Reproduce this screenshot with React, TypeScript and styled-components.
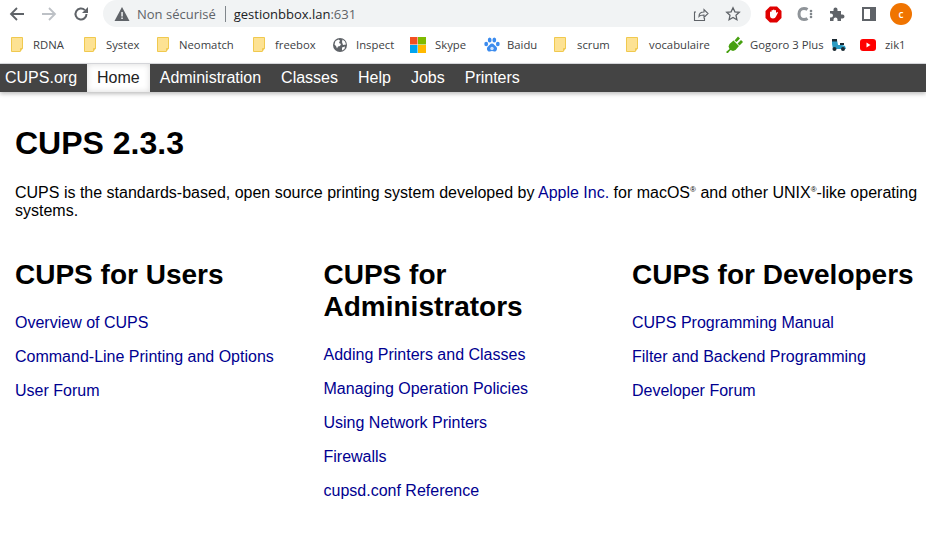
import styled, { createGlobalStyle } from "styled-components";
import { ReactNode } from "react";

const GlobalStyle = createGlobalStyle`
  html, body {
    margin: 0;
    padding: 0;
    background: #fff;
    overflow: hidden;
  }
  body {
    font-family: "Liberation Sans", Arial, sans-serif;
  }
`;

const Page = styled.div`
  width: 926px;
  height: 533px;
  overflow: hidden;
  display: flex;
  flex-direction: column;
`;

const Toolbar = styled.div`
  height: 28px;
  display: flex;
  align-items: center;
  flex-shrink: 0;
`;

const NavIcons = styled.div`
  display: flex;
  align-items: center;
  gap: 10px;
  padding-left: 6px;
  width: 103px;
  box-sizing: border-box;
  flex-shrink: 0;
`;

const IconSlot = styled.span`
  width: 22px;
  height: 22px;
  display: flex;
  align-items: center;
  justify-content: center;
  flex-shrink: 0;
`;

const Omnibox = styled.div`
  width: 648px;
  height: 27px;
  margin-top: -1px;
  border-radius: 14px;
  background: #f1f3f4;
  display: flex;
  align-items: center;
  padding-left: 11px;
  box-sizing: border-box;
  font-family: "Open Sans", sans-serif;
  font-size: 13px;
  flex-shrink: 0;
`;

const NotSecure = styled.span`
  color: #5f6368;
  margin-left: 7px;
  padding-right: 9px;
  border-right: 1px solid #80868b;
  line-height: 16px;
`;

const Host = styled.span`
  color: #202124;
  margin-left: 8px;
  flex: 1;
`;

const Port = styled.span`
  color: #5f6368;
`;

const OmniActions = styled.div`
  display: flex;
  gap: 10px;
  align-items: center;
  padding-right: 7px;
`;

const Extensions = styled.div`
  display: flex;
  align-items: center;
  gap: 10px;
  margin-left: 11px;
`;

const Avatar = styled.span`
  width: 22px;
  height: 22px;
  border-radius: 50%;
  background: #f07400;
  color: #fff;
  font-family: "Open Sans", sans-serif;
  font-size: 10px;
  font-weight: 600;
  display: flex;
  align-items: center;
  justify-content: center;
`;

const BookmarkBar = styled.div`
  height: 36px;
  display: flex;
  align-items: center;
  padding: 0 0 2px 11px;
  box-sizing: border-box;
  border-bottom: 1px solid #dadce0;
  flex-shrink: 0;
`;

const Bookmark = styled.div<{ $w: number; $gap?: number }>`
  width: ${(p) => p.$w}px;
  display: flex;
  align-items: center;
  gap: ${(p) => p.$gap ?? 11}px;
  font-family: "Open Sans", sans-serif;
  font-size: 11.3px;
  color: #3c4043;
  white-space: nowrap;
  flex-shrink: 0;
`;

const NavBar = styled.nav`
  height: 28px;
  background: #444;
  display: flex;
  align-items: stretch;
  font-size: 16px;
  box-shadow: 0 2px 4px rgba(0, 0, 0, 0.25);
  flex-shrink: 0;
`;

const NavLink = styled.a<{ $active?: boolean }>`
  display: flex;
  align-items: center;
  padding: 0 10px;
  color: ${(p) => (p.$active ? "#222" : "#fff")};
  background: ${(p) => (p.$active ? "#fff" : "transparent")};
  box-shadow: ${(p) =>
    p.$active ? "inset 0 0 6px rgba(0,0,0,0.15)" : "none"};
`;

const BrandLink = styled(NavLink)`
  padding: 0 10px 0 5px;
`;

const Content = styled.main`
  padding: 33px 8px 0 15px;
  color: #000;
  font-size: 16px;
`;

const Title = styled.h1`
  margin: 0 0 22px;
  font-size: 32px;
  line-height: 37px;
  font-weight: 700;
`;

const Intro = styled.p`
  margin: 0 0 39px;
  line-height: 18px;
`;

const AppleLink = styled.a`
  color: #000090;
`;

const Sup = styled.sup`
  font-size: 8px;
  line-height: 0;
`;

const Columns = styled.div`
  display: grid;
  grid-template-columns: 308.5px 308.5px 1fr;
`;

const ColumnTitle = styled.h2`
  margin: 0 0 23px;
  font-size: 28px;
  line-height: 32px;
  font-weight: 700;
`;

const LinkList = styled.div`
  display: flex;
  flex-direction: column;
  gap: 16px;
`;

const DocLink = styled.a`
  color: #000090;
  line-height: 18px;
  display: block;
`;

const Folder = () => (
  <svg width="12" height="15" viewBox="0 0 12 15">
    <path d="M.5.500h11v11l-2.500 3H.5z" fill="#fde293" stroke="#f0c94f" />
    <path d="M9.500 14.500v-3h2" fill="none" stroke="#f0c94f" />
  </svg>
);

const Globe = () => (
  <svg width="14" height="14" viewBox="0 0 14 14">
    <circle cx="7" cy="7" r="7" fill="#5f6368" />
    <path d="M2.500 3l3-1.500 1.500 1-1 2.500 2 1-1 2-2 .5-1 2-1-2.500-1.500-1.500zM9.500 1.500l2.500 2 1 3-3 .5-1-3zM9 9.500l3-1-.5 2.500-2.500 1.500z" fill="#fff" />
  </svg>
);

const Windows = () => (
  <svg width="16" height="16" viewBox="0 0 16 16">
    <rect width="7.500" height="7.500" fill="#f25022" />
    <rect x="8" width="8" height="7.500" fill="#7fba00" />
    <rect y="8" width="7.500" height="8" fill="#00a4ef" />
    <rect x="8" y="8" width="8" height="8" fill="#ffb900" />
  </svg>
);

const Paw = () => (
  <svg width="16" height="16" viewBox="0 0 16 16" fill="#3b8bee">
    <ellipse cx="2.200" cy="7" rx="1.900" ry="2.300" />
    <ellipse cx="5.700" cy="3" rx="1.900" ry="2.500" />
    <ellipse cx="10.300" cy="3" rx="1.900" ry="2.500" />
    <ellipse cx="13.800" cy="7" rx="1.900" ry="2.300" />
    <path d="M8 6.500c2 0 2.500 2 4 3 2 1.500 1 5.500-2 5-1-.2-1.300-.4-2-.4s-1 .2-2 .4c-3 .5-4-3.500-2-5 1.500-1 2-3 4-3z" />
    <circle cx="8" cy="11.500" r="1.700" fill="#cfe2fb" />
  </svg>
);

const Plug = () => (
  <svg width="17" height="17" viewBox="0 0 17 17">
    <path d="M0 16l3.500-3-1-2.500 1-2.500 4-3.500 5.500 5.500-3.500 4-2.500 1-2.500-1-3 3.500z" fill="#46a00f" />
    <path d="M8.500 4.500l3.500-4 2 2-3.500 3.500zM11.500 7.500l3.500-3.500 2 2-3.500 3.500z" fill="#46a00f" />
  </svg>
);

const Scooter = () => (
  <svg width="15" height="13" viewBox="0 0 15 13">
    <path d="M1 2h5l1 5h4l3 1 1 3H2l-1-5z" fill="#2a9cc4" />
    <rect x="1" y="1" width="5" height="2.500" fill="#1c2b33" />
    <rect x="9" y="5" width="4" height="2" fill="#1c2b33" />
    <circle cx="3.500" cy="11" r="2" fill="#1c2b33" />
    <circle cx="12" cy="11" r="2" fill="#1c2b33" />
  </svg>
);

const YouTube = () => (
  <svg width="16" height="12" viewBox="0 0 16 12">
    <rect width="16" height="12" rx="3" fill="#f00" />
    <path d="M6.500 3.500v5l4-2.500z" fill="#fff" />
  </svg>
);

const bookmarks: { label: string; icon: ReactNode; w: number; gap?: number }[] = [
  { label: "RDNA", icon: <Folder />, w: 73, gap: 10 },
  { label: "Systex", icon: <Folder />, w: 73, gap: 10 },
  { label: "Neomatch", icon: <Folder />, w: 96, gap: 10 },
  { label: "freebox", icon: <Folder />, w: 80, gap: 10 },
  { label: "Inspect", icon: <Globe />, w: 77, gap: 9 },
  { label: "Skype", icon: <Windows />, w: 74, gap: 9 },
  { label: "Baidu", icon: <Paw />, w: 70, gap: 7 },
  { label: "scrum", icon: <Folder />, w: 72, gap: 11 },
  { label: "vocabulaire", icon: <Folder />, w: 100, gap: 11 },
  { label: "Gogoro 3 Plus", icon: <Plug />, w: 134, gap: 7 },
  { label: "zik1", icon: <YouTube />, w: 50, gap: 9 },
];

const columns = [
  {
    title: "CUPS for Users",
    links: ["Overview of CUPS", "Command-Line Printing and Options", "User Forum"],
  },
  {
    title: "CUPS for Administrators",
    links: [
      "Adding Printers and Classes",
      "Managing Operation Policies",
      "Using Network Printers",
      "Firewalls",
      "cupsd.conf Reference",
    ],
  },
  {
    title: "CUPS for Developers",
    links: ["CUPS Programming Manual", "Filter and Backend Programming", "Developer Forum"],
  },
];

export default function App() {
  return (
    <Page>
      <GlobalStyle />
      <Toolbar>
        <NavIcons>
          <IconSlot>
            <svg width="16" height="16" viewBox="0 0 16 16" fill="none" stroke="#5f6368" strokeWidth="1.800">
              <path d="M15 8H2M8 2L2 8l6 6" />
            </svg>
          </IconSlot>
          <IconSlot>
            <svg width="16" height="16" viewBox="0 0 16 16" fill="none" stroke="#bdc1c6" strokeWidth="1.800">
              <path d="M1 8h13M8 2l6 6-6 6" />
            </svg>
          </IconSlot>
          <IconSlot>
            <svg width="16" height="16" viewBox="0 0 16 16" fill="none">
              <path d="M13.500 8a5.500 5.500 0 1 1-1.600-3.900" stroke="#5f6368" strokeWidth="2" />
              <path d="M15 1v6H9z" fill="#5f6368" />
            </svg>
          </IconSlot>
        </NavIcons>
        <Omnibox>
          <svg width="16" height="14" viewBox="0 0 15 14">
            <path d="M7.500 0L15 14H0z" fill="#5f6368" />
            <rect x="6.800" y="5" width="1.500" height="4.500" fill="#f1f3f4" />
            <rect x="6.800" y="10.500" width="1.500" height="1.500" fill="#f1f3f4" />
          </svg>
          <NotSecure>Non sécurisé</NotSecure>
          <Host>
            gestionbbox.lan<Port>:631</Port>
          </Host>
          <OmniActions>
            <IconSlot>
              <svg width="16" height="16" viewBox="0 0 16 16" fill="none" stroke="#5f6368" strokeWidth="1.100">
                <path d="M3 6H1.500v8.500h10V12" />
                <path d="M6 10.500c0-3 2-4.500 5-4.500V3.500l4 4-4 4V9c-2 0-4 .2-5 1.500z" />
              </svg>
            </IconSlot>
            <IconSlot>
              <svg width="16" height="16" viewBox="0 0 16 16" fill="none" stroke="#5f6368" strokeWidth="1.300">
                <path d="M8 1.800l1.900 4 4.400.5-3.300 3 .9 4.400L8 11.500l-3.900 2.200.9-4.400-3.300-3 4.400-.5z" />
              </svg>
            </IconSlot>
          </OmniActions>
        </Omnibox>
        <Extensions>
          <IconSlot>
            <svg width="17" height="17" viewBox="0 0 17 17">
              <path d="M5 .5h7L16.500 5v7L12 16.500H5L.5 12V5z" fill="#e00000" />
              <path d="M5 8.500V6a.8.8 0 0 1 1.500 0V4.500a.8.800 0 0 1 1.500 0V4a.8.800 0 0 1 1.500 0v.500a.8.800 0 0 1 1.500 0v2.500l.8-.8c.6-.5 1.300 0 1 .7l-1.800 3.600c-.6 1.100-1.500 2-3 2-2 0-3-1.300-3-3z" fill="#fff" />
            </svg>
          </IconSlot>
          <IconSlot>
            <svg width="16" height="16" viewBox="0 0 16 16" fill="none">
              <path d="M10.500 3.500C9.500 2.800 8.200 2.500 7 2.500 3.800 2.500 2 4.800 2 8s1.800 5.500 5 5.500c1.200 0 2.500-.3 3.500-1" stroke="#8f9499" strokeWidth="3" />
              <circle cx="14" cy="5" r="1.300" fill="#80868b" />
              <circle cx="14" cy="8" r="1.300" fill="#80868b" />
              <circle cx="14" cy="11" r="1.300" fill="#80868b" />
            </svg>
          </IconSlot>
          <IconSlot>
            <svg width="16" height="16" viewBox="0 0 16 16">
              <path d="M1 5h3.500V3.500a2 2 0 0 1 4 0V5H12v3.500h1.500a2 2 0 0 1 0 4H12V15H8.500v-1.500a2 2 0 0 0-4 0V15H1v-3.500h1a2 2 0 0 0 0-4H1z" fill="#5f6368" />
            </svg>
          </IconSlot>
          <IconSlot>
            <svg width="14" height="14" viewBox="0 0 14 14" fill="none">
              <rect x="1" y="1" width="12" height="12" stroke="#5f6368" strokeWidth="2" />
              <rect x="8" y="1" width="5" height="12" fill="#5f6368" />
            </svg>
          </IconSlot>
          <Avatar>c</Avatar>
        </Extensions>
      </Toolbar>
      <BookmarkBar>
        {bookmarks.map((b) => (
          <Bookmark key={b.label} $w={b.w} $gap={b.gap}>
            {b.icon}
            <span>{b.label}</span>
            {b.label === "Gogoro 3 Plus" && <Scooter />}
          </Bookmark>
        ))}
      </BookmarkBar>
      <NavBar>
        <BrandLink>CUPS.org</BrandLink>
        <NavLink $active>Home</NavLink>
        <NavLink>Administration</NavLink>
        <NavLink>Classes</NavLink>
        <NavLink>Help</NavLink>
        <NavLink>Jobs</NavLink>
        <NavLink>Printers</NavLink>
      </NavBar>
      <Content>
        <Title>CUPS 2.3.3</Title>
        <Intro>
          CUPS is the standards-based, open source printing system developed by{" "}
          <AppleLink>Apple Inc.</AppleLink> for macOS<Sup>®</Sup> and other UNIX<Sup>®</Sup>-like
          operating systems.
        </Intro>
        <Columns>
          {columns.map((c) => (
            <section key={c.title}>
              <ColumnTitle>{c.title}</ColumnTitle>
              <LinkList>
                {c.links.map((l) => (
                  <DocLink key={l}>{l}</DocLink>
                ))}
              </LinkList>
            </section>
          ))}
        </Columns>
      </Content>
    </Page>
  );
}
